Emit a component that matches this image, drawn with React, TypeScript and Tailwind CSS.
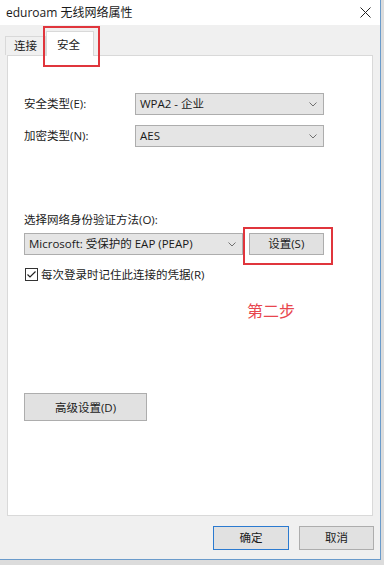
import React from "react";

const font = "font-['Open_Sans','Noto_Sans_CJK_SC',sans-serif]";

const Chevron = () => (
  <svg width="8" height="5" viewBox="0 0 8 5" className="shrink-0">
    <path d="M0.5 0.5 L4 4 L7.5 0.5" fill="none" stroke="#707070" strokeWidth="1" />
  </svg>
);

type SelectProps = {
  value: string;
  className?: string;
};

const Select: React.FC<SelectProps> = ({ value, className = "" }) => (
  <div
    className={`flex items-center justify-between h-[22px] pl-[4px] pr-[6px] bg-[#e5e5e5] border border-[#adadad] text-[11.5px] text-[#1a1a1a] ${className}`}
  >
    <span>{value}</span>
    <Chevron />
  </div>
);

const Button: React.FC<{ label: string; className?: string }> = ({ label, className = "" }) => (
  <div
    className={`flex items-center justify-center bg-[#e1e1e1] border border-[#adadad] text-[11.5px] text-[#1a1a1a] ${className}`}
  >
    {label}
  </div>
);

export default function App() {
  return (
    <div className={`w-[384px] h-[565px] bg-[#dcdcdc] overflow-hidden ${font}`}>
      <div className="relative w-[381px] h-[560px] flex flex-col bg-[#f0f0f0] border-r border-b border-[#6a9bcb]">
        {/* title bar */}
        <div className="h-[25px] bg-white flex items-center justify-between pl-[6px] pr-[9px] shrink-0">
          <span className="text-[12px] text-[#1a1a1a]">eduroam 无线网络属性</span>
          <svg width="11" height="11" viewBox="0 0 11 11">
            <path d="M0.5 0.5 L10.5 10.5 M10.5 0.5 L0.5 10.5" stroke="#222" strokeWidth="1" />
          </svg>
        </div>

        {/* tabs */}
        <div className="flex items-end h-[30px] pl-[5px]">
          <div className="h-[19px] px-[8px] flex items-center border border-b-0 border-[#d9d9d9] bg-[#f0f0f0] text-[11.5px] text-[#1a1a1a]">
            连接
          </div>
          <div className="relative z-10 h-[25px] w-[48px] -mb-px flex items-start pt-[4px] pl-[10px] border border-b-0 border-[#d9d9d9] bg-white text-[11.5px] text-[#1a1a1a]">
            安全
          </div>
        </div>

        {/* panel */}
        <div className="ml-[7px] w-[366px] h-[461px] bg-white border border-[#d9d9d9] pl-[16px] pr-[48px] flex flex-col">
          <div className="mt-[37px] flex items-center">
            <span className="w-[111px] text-[11.5px] text-[#1a1a1a]">安全类型(E):</span>
            <Select value="WPA2 - 企业" className="w-[189px]" />
          </div>
          <div className="mt-[10px] flex items-center">
            <span className="w-[111px] text-[11.5px] text-[#1a1a1a]">加密类型(N):</span>
            <Select value="AES" className="w-[189px]" />
          </div>

          <div className="mt-[65px] text-[11.5px] text-[#1a1a1a] leading-[16px]">选择网络身份验证方法(O):</div>
          <div className="mt-[5px] flex items-center gap-[6px]">
            <Select value="Microsoft: 受保护的 EAP (PEAP)" className="w-[220px]" />
            <Button label="设置(S)" className="w-[76px] h-[22px]" />
          </div>
          <div className="mt-[11px] flex items-center gap-[3px] pl-[1px]">
            <svg width="13" height="13" viewBox="0 0 13 13">
              <rect x="0.5" y="0.5" width="12" height="12" fill="white" stroke="#333" />
              <path d="M2.5 6.5 L5 9 L10.5 3.5" fill="none" stroke="#222" strokeWidth="1.2" />
            </svg>
            <span className="text-[11.5px] text-[#1a1a1a]">每次登录时记住此连接的凭据(R)</span>
          </div>

          <div className="mt-[17px] ml-[223px] text-[16px] leading-[20px] text-[#e8464e] font-['Noto_Sans_CJK_SC',sans-serif]">
            第二步
          </div>

          <Button label="高级设置(D)" className="mt-[73px] w-[123px] h-[28px]" />
        </div>

        {/* bottom buttons */}
        <div className="flex justify-end gap-[10px] pr-[6px] mt-[10px]">
          <Button label="确定" className="w-[76px] h-[24px] !border-[#2b7ad0]" />
          <Button label="取消" className="w-[75px] h-[24px]" />
        </div>

        {/* red annotation boxes */}
        <div className="absolute left-[43px] top-[26px] w-[57px] h-[41px] border-2 border-[#e0353c]" />
        <div className="absolute left-[243px] top-[227px] w-[90px] h-[38px] border-2 border-[#e0353c]" />
      </div>
    </div>
  );
}
